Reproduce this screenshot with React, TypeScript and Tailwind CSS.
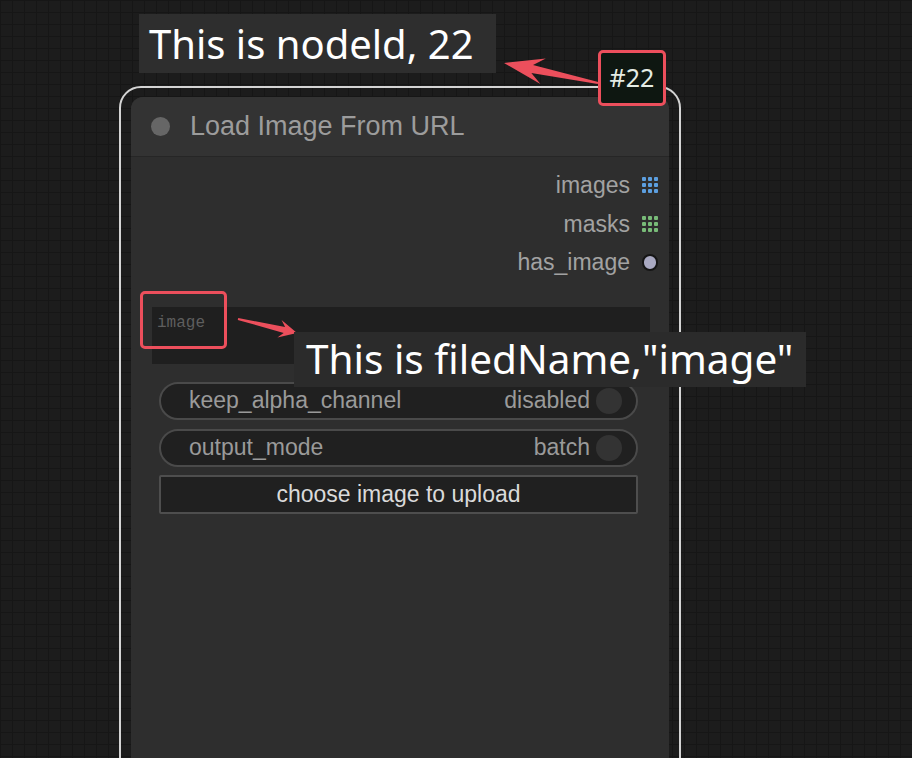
import React from 'react';

type Pt = [number, number];

// swept-back annotation arrow, tail thin, head wide
function arrowPoints(tail: Pt, tip: Pt, headLen: number, headW: number, neck: number, tailW: number) {
  const dx = tip[0] - tail[0];
  const dy = tip[1] - tail[1];
  const len = Math.hypot(dx, dy);
  const ux = dx / len;
  const uy = dy / len;
  const nx = -uy;
  const ny = ux;
  const at = (back: number, side: number): string =>
    `${tip[0] - ux * back + nx * side},${tip[1] - uy * back + ny * side}`;
  const tl = (side: number): string => `${tail[0] + nx * side},${tail[1] + ny * side}`;
  return [
    `${tip[0]},${tip[1]}`,
    at(headLen, headW),
    at(headLen * 0.72, neck),
    tl(tailW),
    tl(-tailW),
    at(headLen * 0.72, -neck),
    at(headLen, -headW),
  ].join(' ');
}

function DotGrid({ color }: { color: string }) {
  return (
    <div className="grid grid-cols-3 gap-[2px] w-[16px] h-[16px]">
      {Array.from({ length: 9 }).map((_, i) => (
        <span key={i} className="block w-[4px] h-[4px] rounded-[1px]" style={{ backgroundColor: color }} />
      ))}
    </div>
  );
}

function Output({ label, children }: { label: string; children: React.ReactNode }) {
  return (
    <div className="flex h-[38.5px] items-center justify-end gap-[12px] pr-[11px]">
      <span className="text-[23px] text-[#a2a2a2]">{label}</span>
      <div className="flex w-[16px] justify-center">{children}</div>
    </div>
  );
}

function Toggle({ label, value }: { label: string; value: string }) {
  return (
    <div className="flex h-[38px] items-center rounded-full border-2 border-[#4a4a4a] bg-[#202020] pl-[28px] pr-[14px]">
      <span className="flex-1 text-[23px] text-[#9a9a9a]">{label}</span>
      <span className="text-[23px] text-[#9a9a9a]">{value}</span>
      <span className="ml-[6px] h-[26px] w-[26px] rounded-full bg-[#333333]" />
    </div>
  );
}

export default function App() {
  return (
    <div
      className="relative h-[758px] w-[912px] overflow-hidden bg-[#1c1c1c] bg-[linear-gradient(to_right,#161616_1px,transparent_1px),linear-gradient(to_bottom,#161616_1px,transparent_1px)] bg-[size:12px_12px]"
      style={{ fontFamily: '"Liberation Sans", Arial, sans-serif' }}
    >
      {/* selected node */}
      <div className="absolute left-[119px] top-[86px] h-[720px] w-[562px] rounded-[22px] border-2 border-[#d4d4d4] px-[10px] pt-[9px]">
        <div className="flex h-full flex-col overflow-hidden rounded-[12px] bg-[#2e2e2e]">
          <div className="flex h-[60px] items-center gap-[20px] border-b border-[#262626] bg-[#333333] pl-[20px]">
            <span className="h-[19px] w-[19px] rounded-full bg-[#666666]" />
            <span className="text-[27px] text-[#9c9c9c]">Load Image From URL</span>
          </div>

          <div className="flex flex-col pt-[9px]">
            <Output label="images">
              <DotGrid color="#5c9fe0" />
            </Output>
            <Output label="masks">
              <DotGrid color="#78bb78" />
            </Output>
            <Output label="has_image">
              <span className="h-[17px] w-[17px] rounded-full border-2 border-[#151515] bg-[#a9a9c2]" />
            </Output>
          </div>

          <div className="ml-[21px] mr-[19px] mt-[25px] h-[57px] bg-[#1f1f1f] pl-[5px] pt-[3px]">
            <span className="text-[16px] text-[#5e5e5e]" style={{ fontFamily: '"Liberation Mono", monospace' }}>
              image
            </span>
          </div>

          <div className="ml-[28px] mr-[31px] mt-[18px] flex flex-col gap-[9px]">
            <Toggle label="keep_alpha_channel" value="disabled" />
            <Toggle label="output_mode" value="batch" />
            <div className="-mt-[1px] flex h-[39px] items-center justify-center rounded-[2px] border-2 border-[#4e4e4e] bg-[#202020] text-[23px] text-[#dadada]">
              choose image to upload
            </div>
          </div>
        </div>
      </div>

      {/* annotation arrows */}
      <svg className="pointer-events-none absolute inset-0" width="912" height="758">
        <polygon points={arrowPoints([598, 83], [504, 63], 40, 13, 4, 1)} fill="#ec4f5c" />
        <polygon points={arrowPoints([238, 319], [297, 333], 18, 9, 3, 1)} fill="#ec4f5c" />
      </svg>

      {/* annotation labels */}
      <div
        className="absolute left-[139px] top-[14px] flex h-[59px] w-[357px] items-center bg-[#2e2e2e] pl-[10px] text-[40px] leading-none text-white"
        style={{ fontFamily: '"Noto Sans", sans-serif' }}
      >
        This is nodeld, 22
      </div>

      <div
        className="absolute left-[294px] top-[332px] flex h-[55px] w-[512px] items-center bg-[#2b2b2b] pl-[12px] text-[40.5px] leading-none text-white"
        style={{ fontFamily: '"Noto Sans", sans-serif' }}
      >
        This is filedName,"image"
      </div>

      <div className="absolute left-[598px] top-[50px] flex h-[56px] w-[68px] items-center justify-center rounded-[5px] border-[3px] border-[#ec4f5c] bg-[#0e1711]">
        <span className="text-[25px] text-[#e4ece4]" style={{ fontFamily: '"Noto Sans", sans-serif' }}>
          #22
        </span>
      </div>

      <div className="absolute left-[140px] top-[291px] h-[58px] w-[87px] rounded-[5px] border-[3px] border-[#ec4f5c]" />
    </div>
  );
}
